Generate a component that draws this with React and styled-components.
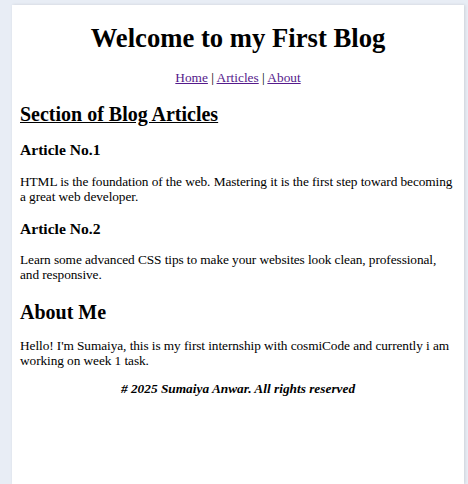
import styled, { createGlobalStyle } from "styled-components";

const GlobalStyle = createGlobalStyle`
  html, body {
    margin: 0;
    padding: 0;
    background: #e8edf5;
    font-family: "Liberation Serif", "Times New Roman", serif;
    font-size: 13.333px;
    color: #000;
  }
`;

const Page = styled.div`
  margin: 5px 4px 0 12px;
  min-height: 479px;
  background: #fff;
  box-shadow: 1px 0 3px rgba(0, 0, 0, 0.12);
  padding: 1px 8px 10px;
  box-sizing: border-box;
`;

const Header = styled.header`
  text-align: center;
`;

const Title = styled.h1`
  font-size: 2em;
  margin: 17px 0 16px;
`;

const Nav = styled.nav`
  a {
    color: #551a8b;
  }
`;

const Section = styled.section`
  margin-bottom: ${({ $gap }) => $gap || 0}px;
`;

const SectionTitle = styled.h2`
  font-size: 1.5em;
  margin: 0.83em 0 0.72em;
  text-decoration: ${({ $underline }) => ($underline ? "underline" : "none")};
`;

const Article = styled.article`
  margin-bottom: 16px;
`;

const ArticleTitle = styled.h3`
  font-size: 1.17em;
  margin: 1em 0 14.5px;
`;

const Text = styled.p`
  margin: 1em 0;
  line-height: 15px;
  letter-spacing: -0.08px;
`;

const Footer = styled.p`
  text-align: center;
  font-style: italic;
  font-weight: bold;
  margin: 1em 0;
`;

const articles = [
  {
    title: "Article No.1",
    text: "HTML is the foundation of the web. Mastering it is the first step toward becoming a great web developer.",
  },
  {
    title: "Article No.2",
    text: "Learn some advanced CSS tips to make your websites look clean, professional, and responsive.",
  },
];

export default function App() {
  return (
    <>
      <GlobalStyle />
      <Page>
        <Header>
          <Title>Welcome to my First Blog</Title>
          <Nav>
            <a href="#home">Home</a> | <a href="#articles">Articles</a> |{" "}
            <a href="#about">About</a>
          </Nav>
        </Header>
        <Section $gap={18.5}>
          <SectionTitle $underline>Section of Blog Articles</SectionTitle>
          {articles.map((a) => (
            <Article key={a.title}>
              <ArticleTitle>{a.title}</ArticleTitle>
              <Text>{a.text}</Text>
            </Article>
          ))}
        </Section>
        <Section>
          <SectionTitle>About Me</SectionTitle>
          <Text>
            Hello! I'm Sumaiya, this is my first internship with cosmiCode and
            currently i am working on week 1 task.
          </Text>
        </Section>
        <Footer># 2025 Sumaiya Anwar. All rights reserved</Footer>
      </Page>
    </>
  );
}
